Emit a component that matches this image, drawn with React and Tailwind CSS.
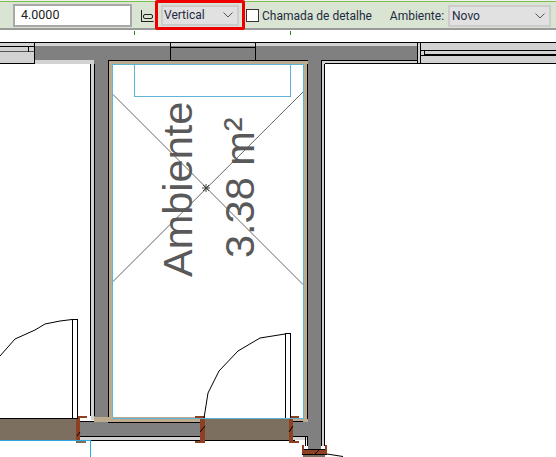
import React from "react";

const Chevron = () => (
  <svg width="10" height="6" viewBox="0 0 10 6" fill="none" stroke="#555" strokeWidth="1">
    <path d="M0.5 0.5 L5 5 L9.5 0.5" />
  </svg>
);

function Plan() {
  const k = "#000";
  const dark = "#808080";
  const light = "#d2d2d2";
  const tan = "#bdab8f";
  const blue = "#5db4d6";
  const door = "#7c6f60";
  const frame = "#8f3f22";
  return (
    <svg width="556" height="427" viewBox="0 30 556 427" className="block" shapeRendering="crispEdges">
      <rect x="0" y="30" width="556" height="427" fill="#fff" />
      <rect x="134" y="31" width="1" height="4" fill="#1a8a1a" />
      <rect x="290" y="31" width="1" height="4" fill="#1a8a1a" />

      {/* top band */}
      <rect x="0" y="42" width="556" height="1" fill={k} />
      <rect x="0" y="43" width="556" height="21" fill="none" />
      <rect x="0" y="43" width="35" height="21" fill={light} />
      <rect x="0" y="46" width="35" height="1" fill={k} />
      <rect x="0" y="51" width="35" height="1" fill="#555" />
      <rect x="28" y="46" width="1" height="6" fill={k} />
      <rect x="34" y="43" width="1" height="21" fill={k} />
      <rect x="0" y="63" width="91" height="1" fill={k} />
      <rect x="35" y="43" width="385" height="4" fill={light} />
      <rect x="35" y="46" width="385" height="14" fill={dark} />
      <rect x="35" y="60" width="56" height="4" fill={light} />
      <rect x="170" y="47" width="85" height="1" fill={k} />
      <rect x="170" y="43" width="1" height="17" fill={k} />
      <rect x="255" y="43" width="1" height="17" fill={k} />
      <rect x="418" y="43" width="138" height="21" fill={light} />
      <rect x="417" y="43" width="1" height="21" fill={k} />
      <rect x="420" y="43" width="1" height="21" fill={k} />
      <rect x="421" y="50" width="135" height="1" fill={k} />
      <rect x="424" y="54" width="132" height="1" fill={k} />
      <rect x="424" y="51" width="1" height="4" fill={k} />
      <rect x="421" y="55" width="135" height="1" fill={k} />
      <rect x="421" y="63" width="135" height="1" fill={k} />

      {/* left vertical wall */}
      <rect x="91" y="60" width="3" height="360" fill={light} />
      <rect x="94" y="60" width="14" height="362" fill={dark} />
      <rect x="108" y="60" width="5" height="362" fill={tan} />
      <rect x="90" y="64" width="1" height="352" fill={k} />
      <rect x="94" y="64" width="1" height="352" fill={k} />

      {/* right vertical wall */}
      <rect x="303" y="60" width="5" height="362" fill={tan} />
      <rect x="308" y="60" width="13" height="390" fill={dark} />
      <rect x="307" y="60" width="1" height="359" fill={k} />
      <rect x="321" y="60" width="3" height="386" fill={light} />
      <rect x="321" y="60" width="1" height="386" fill={k} />
      <rect x="324" y="60" width="1" height="386" fill={k} />
      <rect x="322" y="60" width="234" height="1" fill="none" />
      <rect x="325" y="64" width="231" height="393" fill="#fff" />
      <rect x="321" y="60" width="97" height="1" fill={k} />
      <rect x="322" y="61" width="95" height="3" fill={light} />
      <rect x="325" y="63" width="231" height="1" fill={k} />

      {/* room */}
      <rect x="113" y="64" width="190" height="354" fill="#fff" />
      <rect x="108" y="60" width="200" height="4" fill={tan} />
      <rect x="108" y="60" width="200" height="1" fill={k} />
      <rect x="108" y="60" width="1" height="360" fill={k} />
      <rect x="112" y="64" width="192" height="1" fill={blue} />
      <rect x="112" y="64" width="1" height="354" fill={blue} />
      <rect x="303" y="64" width="1" height="354" fill={blue} />

      {/* inner region */}
      <rect x="134" y="64" width="1" height="33" fill={blue} />
      <rect x="290" y="64" width="1" height="33" fill={blue} />
      <rect x="134" y="96" width="157" height="1" fill={blue} />

      {/* room cross */}
      <g shapeRendering="auto">
        <path d="M113 94.5 L303 284.5 M303 92 L113 281.5" stroke="#666" strokeWidth="1" fill="none" />
        <path d="M202 188 H210 M206 184 V192 M203 185 L209 191 M209 185 L203 191" stroke="#444" strokeWidth="1" fill="none" />
        <text transform="translate(192 277) rotate(-90)" fontFamily="'Liberation Sans', sans-serif" fontSize="41.5" fill="#595959">Ambiente</text>
        <text transform="translate(254 258) rotate(-90)" fontFamily="'Liberation Sans', sans-serif" fontSize="41.5" fill="#595959">3.38 m²</text>
      </g>

      {/* bottom wall */}
      <rect x="94" y="417" width="107" height="5" fill={tan} />
      <rect x="94" y="422" width="107" height="15" fill={dark} />
      <rect x="80" y="422" width="121" height="15" fill={dark} />
      <rect x="80" y="437" width="121" height="3" fill={light} />
      <rect x="80" y="421" width="14" height="1" fill={k} />
      <rect x="108" y="422" width="93" height="1" fill={k} />
      <rect x="80" y="436" width="121" height="1" fill={k} />
      <rect x="80" y="440" width="121" height="1" fill={k} />

      {/* left door */}
      <rect x="0" y="418" width="77" height="22" fill={door} />
      <rect x="0" y="418" width="77" height="1" fill={k} />
      <rect x="76" y="418" width="4" height="24" fill={frame} stroke={k} strokeWidth="0" />
      <rect x="77" y="416" width="10" height="2" fill={frame} />
      <rect x="76" y="441" width="10" height="2" fill={door} />
      <rect x="0" y="440" width="90" height="1" fill="#29a9e0" />
      <rect x="90" y="440" width="1" height="17" fill="#29a9e0" />
      <rect x="72" y="319" width="5" height="99" fill="#fff" stroke={k} strokeWidth="1" />

      {/* second door */}
      <rect x="205" y="419" width="84" height="21" fill={door} />
      <rect x="205" y="440" width="84" height="1" fill={k} />
      <rect x="200" y="418" width="5" height="24" fill={frame} />
      <rect x="195" y="416" width="10" height="2" fill={frame} />
      <rect x="195" y="441" width="10" height="2" fill={frame} />
      <rect x="289" y="418" width="4" height="24" fill={frame} />
      <rect x="289" y="416" width="10" height="2" fill={frame} />
      <rect x="289" y="441" width="10" height="2" fill={frame} />
      <rect x="285" y="333" width="5" height="85" fill="#fff" stroke={k} strokeWidth="1" />
      <rect x="293" y="419" width="15" height="3" fill={tan} />
      <rect x="293" y="422" width="15" height="14" fill={dark} />
      <rect x="293" y="421" width="10" height="1" fill={k} />
      <rect x="293" y="436" width="14" height="1" fill={k} />
      <rect x="293" y="437" width="14" height="3" fill={light} />
      <rect x="293" y="440" width="2" height="1" fill={k} />
      <rect x="305" y="436" width="1" height="10" fill={k} />
      <rect x="307" y="436" width="1" height="10" fill={k} />

      <rect x="112" y="418" width="192" height="1" fill={blue} />

      {/* bottom frame */}
      <rect x="303" y="454" width="22" height="3" fill={door} />
      <rect x="304" y="449" width="21" height="5" fill={frame} />
      <rect x="302" y="445" width="2" height="9" fill={frame} />
      <rect x="325" y="445" width="2" height="9" fill={frame} />
      <rect x="304" y="449" width="21" height="1" fill={k} />
      <rect x="302" y="454" width="25" height="1" fill={k} />

      {/* swings */}
      <g shapeRendering="auto" fill="none" stroke={k} strokeWidth="1">
        <path d="M72 319.5 L60 321 L45 324 L35 330 L15 339 L0 356" />
        <path d="M285 334 L260 338 L238 351 L219 371 L208 393 L204 418" />
        <path d="M327 454 L343 456.5" />
        <path d="M77 436 L80 432 M200 432 L205 426 M289 432 L293 426 M315 454 L320 449" />
      </g>
    </svg>
  );
}

export default function App() {
  return (
    <div className="w-[556px] h-[457px] overflow-hidden bg-white font-['Roboto',sans-serif] text-[12px] text-[#1f2a44]">
      <div className="h-[30px] bg-[#d9e4d2] border-t border-t-[#f0f0f0] border-b-2 border-b-[#9a9a9a] relative">
        <div className="h-px bg-[#7cc04c]" />
        <div className="flex items-center h-[27px]">
          <div className="ml-[13px] w-[119px] h-[23px] bg-white border-2 border-[#a8a8a8] flex items-center pl-1.5 text-[12.5px] text-[#222]">4.0000</div>
          <svg className="ml-[8px] w-[14px] h-[14px]" viewBox="0 0 14 14" fill="none" stroke="#222" strokeWidth="1">
            <path d="M1.5 1 V13 M1.5 12.5 H13.5" />
            <rect x="3.5" y="5.5" width="9" height="4" rx="1.5" />
          </svg>
          <div className="ml-[1px] w-[90px] h-[30px] border-[3px] border-[#ee0000] rounded-[2px] flex items-center justify-center shrink-0 -mt-[1px]">
            <div className="w-[78px] h-[21px] bg-[#e1e1e1] border-2 border-[#cccccc] flex items-center justify-between pl-[1px] pr-[4px] text-[#1f2a44]">
              <span>Vertical</span>
              <Chevron />
            </div>
          </div>
          <div className="ml-[1px] w-[13px] h-[13px] bg-white border border-[#333]" />
          <span className="ml-[3px]">Chamada de detalhe</span>
          <span className="ml-[18px]">Ambiente:</span>
          <div className="ml-[4px] w-[103px] h-[22px] bg-[#e1e1e1] border-2 border-[#cccccc] flex items-center justify-between pl-[2px] pr-[4px]">
            <span>Novo</span>
            <Chevron />
          </div>
        </div>
      </div>
      <Plan />
    </div>
  );
}
